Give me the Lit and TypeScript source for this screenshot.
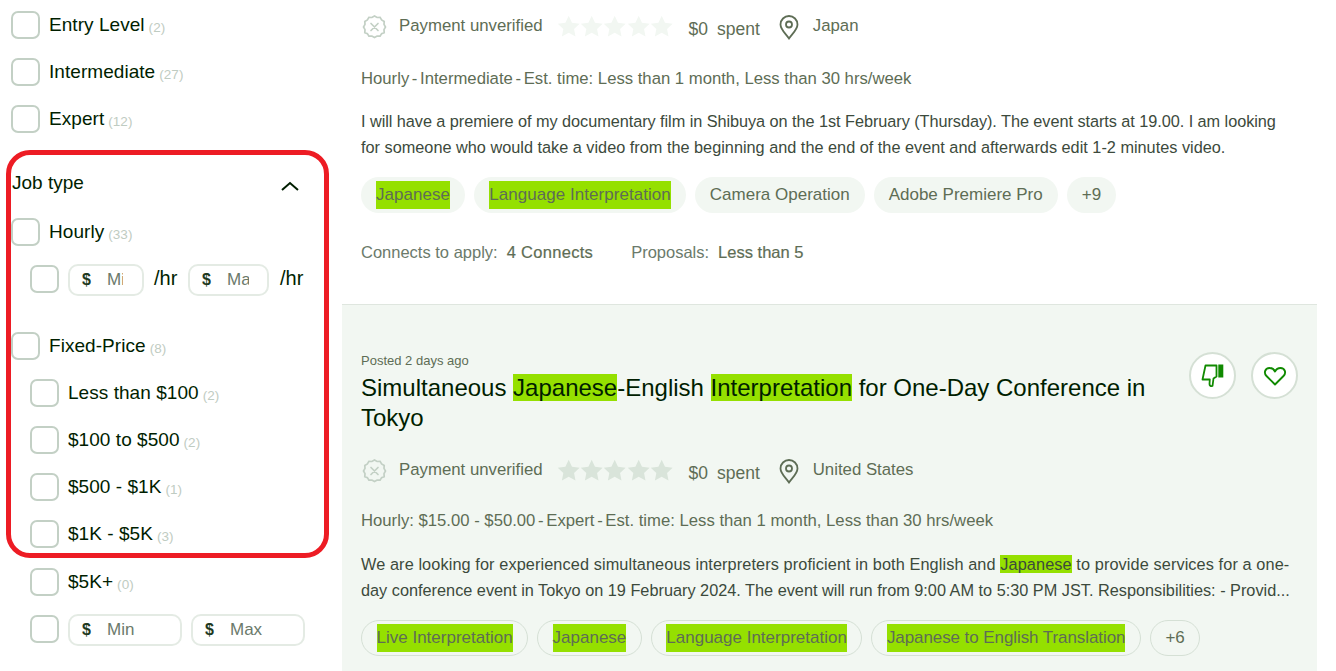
import { LitElement, html, css, svg } from "lit";
import { customElement } from "lit/decorators.js";

const STAR = "M12 2.2l3 6.4 7 .9-5.1 4.8 1.3 6.9-6.2-3.4-6.2 3.4 1.3-6.9L2 9.500l7-.9z";

@customElement("app-root")
export class AppRoot extends LitElement {
  static styles = css`
    :host { display: block; width: 1336px; height: 671px; overflow: hidden; background: #fff; font-family: "Liberation Sans", Arial, sans-serif; color: #001e00; }
    * { box-sizing: border-box; }
    .page { display: flex; height: 671px; align-items: flex-start; }
    .side { width: 342px; flex: none; padding: 11px 0 0 11px; display: flex; flex-direction: column; }
    .main { width: 975px; flex: none; height: 671px; overflow: hidden; display: flex; flex-direction: column; }
    .list { display: flex; flex-direction: column; gap: 19px; }
    .row { display: flex; align-items: center; height: 28px; gap: 9px; font-size: 19px; letter-spacing: 0.05px; white-space: nowrap; }
    .row.sub { margin-left: 19px; }
    .cb { width: 29px; height: 28px; flex: none; border: 2px solid #c3d0c5; border-radius: 7px; background: #fff; }
    .count { font-size: 13.5px; color: #bfccc2; margin-left: 4px; position: relative; top: 1px; }
    .job { margin: 17px 0 10px -5px; width: 323px; height: 408px; border: 5px solid #ed1c24; border-radius: 24px; }
    .job-head { display: flex; justify-content: space-between; align-items: center; height: 63px; padding: 0 25px 8px 1px; font-size: 19px; }
    .job-head svg { display: block; margin-top: 6px; }
    .field { height: 32px; margin-top: 2px; border: 2px solid #e4ebe4; border-radius: 10px; display: flex; align-items: center; padding-left: 12px; font-size: 17px; color: #6b7a6b; overflow: hidden; background: #fff; flex: none; }
    .field b { font-weight: 700; color: #1f3a1f; width: 25px; flex: none; font-size: 16px; }
    .clip-a { width: 16px; overflow: hidden; white-space: nowrap; }
    .clip-b { width: 22px; overflow: hidden; white-space: nowrap; }
    .w-a { width: 76px; }
    .w-b { width: 81px; }
    .w-c { width: 114px; }
    .hr { font-size: 20px; width: 25px; margin: 0 0 1px 1px; }
    .hr.last { margin-left: 2px; }
    .rate { margin-left: 19px; gap: 9px; display: flex; align-items: center; height: 28px; white-space: nowrap; }
    .fixed { margin-top: 20px; }
    .card { padding: 0 20px 0 19px; flex: none; }
    .card.one { height: 304px; padding-top: 13px; }
    .card.two { flex: 1; background: #f2f7f2; border-top: 1px solid #dfe6df; padding-top: 48px; position: relative; }
    .stats { display: flex; align-items: flex-start; height: 27px; font-size: 16.8px; color: #5e6d55; white-space: nowrap; }
    .stats .shield { margin: 1px 12px 0 1px; flex: none; }
    .stats .stars { display: flex; margin: 2px 0 0 14px; gap: 0; }
    .stats .spent { margin: 6px 19px 0 15px; word-spacing: 4px; font-size: 17.5px; }
    .stats .pin { flex: none; margin: 2px 14px 0 0; }
    .stats .t { margin-top: 3px; }
    .meta { margin-top: 26px; font-size: 16.7px; color: #5e6d55; line-height: 26px; white-space: nowrap; }
    .meta i { font-style: normal; margin: 0 -2px; }
    .desc { margin-top: 16px; font-size: 16.3px; line-height: 26px; color: #3c4a3c; white-space: nowrap; }
    .tight { letter-spacing: -0.055px; }
    .loose { letter-spacing: 0.1px; }
    .chips { display: flex; gap: 9px; margin-top: 17px; }
    .chip { height: 36px; border-radius: 18px; padding: 0 15px; display: flex; align-items: center; background: #f2f7f2; font-size: 17px; color: #5e6d55; white-space: nowrap; }
    .one .chip mark { letter-spacing: 0.05px; }
    .two .chip { background: transparent; border: 1px solid #d5e0d5; padding: 0 14.5px; }
    .two .chip.narrow { letter-spacing: -0.08px; }
    mark { background: #95e000; color: #5e6d55; }
    .chip mark { display: inline-block; line-height: 28px; }
    .desc mark { color: #3c4a3c; }
    h2 mark { color: #001e00; }
    .conn { margin-top: 26px; font-size: 16.5px; color: #6b7a6b; display: flex; gap: 38px; line-height: 26px; }
    .conn span span { color: #5e6d55; margin-left: 9px; -webkit-text-stroke: 0.2px #5e6d55; }
    .conn span span.wide { letter-spacing: 0.3px; }
    .posted { font-size: 13px; color: #5e6d55; line-height: 16px; }
    h2 { margin: 4px 0 0; font-weight: 400; font-size: 24px; line-height: 30px; width: 800px; }
    .two .stats { margin-top: 24px; }
    .two .meta { margin-top: 24px; }
    .two .desc { margin-top: 17px; }
    .actions { position: absolute; top: 47px; right: 19px; display: flex; gap: 15px; }
    .round { width: 47px; height: 47px; border-radius: 50%; border: 2px solid #d5e0d5; background: #fff; display: flex; align-items: center; justify-content: center; }
    .right { flex: 1; }
  `;

  private box() { return html`<span class="cb"></span>`; }

  private row(label: string, count: string, sub = false) {
    return html`<div class="row ${sub ? "sub" : ""}">${this.box()}<span>${label}<span class="count">(${count})</span></span></div>`;
  }

  private shield() {
    return html`<svg class="shield" width="25" height="25" viewBox="0 0 25 25" fill="none" stroke="#c3d0c5" stroke-width="1.7">
      <path d="M12.500 2l2.600 1.500 3-.2 1.500 2.600 2.600 1.500-.2 3 1.500 2.600-1.500 2.600.2 3-2.600 1-1.500 2.600-3-.2-2.600 1.500-2.600-1.500-3 .2-1.500-2.600-2.600-1 .2-3L1.500 13 3 10.400l-.2-3 2.600-1.500 1.500-2.600 3 .2z"/>
      <path d="M9 9.500l7 7M16 9.500l-7 7" stroke-linecap="round"/>
    </svg>`;
  }

  private stars(color: string) {
    return html`<span class="stars">${[0, 1, 2, 3, 4].map(() => html`<svg width="23.400" height="23" viewBox="1.500 1.500 21 21" fill="${color}">${svg`<path d="${STAR}"/>`}</svg>`)}</span>`;
  }

  private pin() {
    return html`<svg class="pin" width="20" height="25" viewBox="0 0 20 25" fill="none" stroke="#5e6d55" stroke-width="1.8">
      <path d="M10 23.500C6.500 18.500 1.500 14.500 1.500 9.500a8.500 8.500 0 0 1 17 0c0 5-5 9-8.500 14z"/><circle cx="10" cy="9.500" r="3"/>
    </svg>`;
  }

  private stats(color: string, country: string) {
    return html`<div class="stats">${this.shield()}<span class="t">Payment unverified</span>${this.stars(color)}<span class="spent">$0 spent</span>${this.pin()}<span class="t">${country}</span></div>`;
  }

  render() {
    return html`<div class="page">
      <div class="side">
        <div class="list">
          ${this.row("Entry Level", "2")}
          ${this.row("Intermediate", "27")}
          ${this.row("Expert", "12")}
        </div>
        <div class="job">
          <div class="job-head"><span>Job type</span>
            <svg width="18" height="10" viewBox="0 0 18 10" fill="none" stroke="#001e00" stroke-width="2"><path d="M1 9l8-7 8 7"/></svg>
          </div>
          <div class="list">
            ${this.row("Hourly", "33")}
            <div class="rate">
              ${this.box()}
              <div class="field w-a"><b>$</b><span class="clip-a">Min</span></div>
              <span class="hr">/hr</span>
              <div class="field w-b"><b>$</b><span class="clip-b">Max</span></div>
              <span class="hr last">/hr</span>
            </div>
            <div class="row fixed">${this.box()}<span>Fixed-Price<span class="count">(8)</span></span></div>
            ${this.row("Less than $100", "2", true)}
            ${this.row("$100 to $500", "2", true)}
            ${this.row("$500 - $1K", "1", true)}
            ${this.row("$1K - $5K", "3", true)}
          </div>
        </div>
        <div class="list">
          ${this.row("$5K+", "0", true)}
          <div class="rate">
            ${this.box()}
            <div class="field w-c"><b>$</b>Min</div>
            <div class="field w-c"><b>$</b>Max</div>
          </div>
        </div>
      </div>
      <div class="main">
        <div class="card one">
          ${this.stats("#f2f7f2", "Japan")}
          <div class="meta">Hourly <i>-</i> Intermediate <i>-</i> Est. time: Less than 1 month, Less than 30 hrs/week</div>
          <div class="desc"><span class="tight">I will have a premiere of my documentary film in Shibuya on the 1st February (Thursday). The event starts at 19.00. I am looking</span><br>for someone who would take a video from the beginning and the end of the event and afterwards edit 1-2 minutes video.</div>
          <div class="chips">
            <span class="chip"><mark>Japanese</mark></span>
            <span class="chip"><mark>Language Interpretation</mark></span>
            <span class="chip">Camera Operation</span>
            <span class="chip">Adobe Premiere Pro</span>
            <span class="chip">+9</span>
          </div>
          <div class="conn"><span>Connects to apply:<span class="wide">4 Connects</span></span><span>Proposals:<span>Less than 5</span></span></div>
        </div>
        <div class="card two">
          <div class="actions">
            <div class="round"><svg width="26" height="26" viewBox="0 0 26 26" fill="none" stroke="#108a00" stroke-width="1.800"><path d="M5.500 2.500h11v11l-3 2-1 7.500c-2 .5-3-.5-3-2l.3-4.500H2.500z" stroke-linejoin="round"/><rect x="18.300" y="1.500" width="5" height="13" fill="#108a00" stroke="none"/></svg></div>
            <div class="round"><svg width="24" height="22" viewBox="0 0 24 22" fill="none" stroke="#108a00" stroke-width="1.900"><path d="M12 19.500L3.500 11C.5 8 2 3 6.500 3c2.500 0 4.500 1.500 5.500 3.500C13 4.500 15 3 17.500 3 22 3 23.500 8 20.500 11z" stroke-linejoin="round"/></svg></div>
          </div>
          <div class="posted">Posted 2 days ago</div>
          <h2>Simultaneous <mark>Japanese</mark>-English <mark>Interpretation</mark> for One-Day Conference in Tokyo</h2>
          ${this.stats("#d9e4da", "United States")}
          <div class="meta">Hourly: $15.00 - $50.00 <i>-</i> Expert <i>-</i> Est. time: Less than 1 month, Less than 30 hrs/week</div>
          <div class="desc"><span class="loose">We are looking for experienced simultaneous interpreters proficient in both English and <mark>Japanese</mark> to provide services for a one-</span><br>day conference event in Tokyo on 19 February 2024. The event will run from 9:00 AM to 5:30 PM JST. Responsibilities: - Provid...</div>
          <div class="chips">
            <span class="chip"><mark>Live Interpretation</mark></span>
            <span class="chip"><mark>Japanese</mark></span>
            <span class="chip"><mark>Language Interpretation</mark></span>
            <span class="chip narrow"><mark>Japanese to English Translation</mark></span>
            <span class="chip">+6</span>
          </div>
        </div>
      </div>
      <div class="right"></div>
    </div>`;
  }
}
